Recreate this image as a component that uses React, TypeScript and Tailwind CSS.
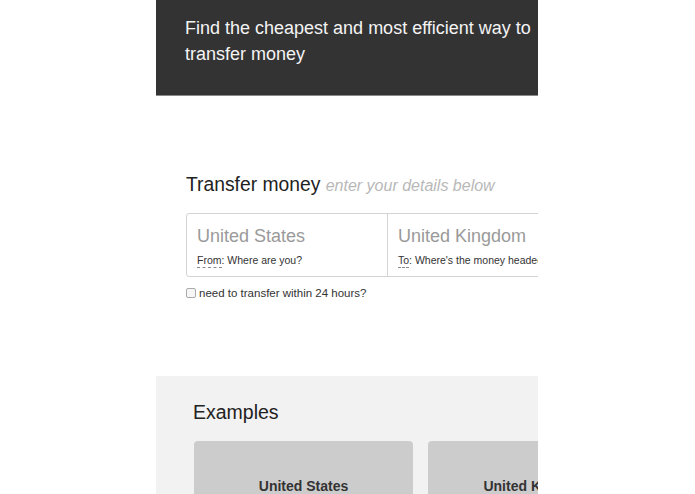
import React from 'react';

const font = { fontFamily: '"Liberation Sans", Arial, Helvetica, sans-serif' };

function CountryCell({ country, label, hint, last }: { country: string; label: string; hint: string; last?: boolean }) {
  return (
    <div className={`w-[201px] shrink-0 px-[10px] pt-[9px] ${last ? '' : 'border-r border-[#d4d4d4]'}`}>
      <div className="text-[18px] leading-[26px] text-[#9a9a9a] whitespace-nowrap">{country}</div>
      <div className="mt-[4px] text-[10.5px] leading-[14px] text-[#333] whitespace-nowrap">
        <span className="border-b border-dashed border-[#888] pb-[1px]">{label}</span>
        {': '}
        {hint}
      </div>
    </div>
  );
}

export default function App() {
  return (
    <div className="min-h-[494px] bg-white" style={font}>
      <div className="ml-[156px] w-[382px] overflow-hidden">
        {/* Hero */}
        <div className="h-[96px] bg-[#333333] border-b border-[#8a8a8a] pl-[29px] pt-[15px]">
          <p className="text-[18px] leading-[26px] text-[#f4f4f4] whitespace-nowrap">
            Find the cheapest and most efficient way to
            <br />
            transfer money
          </p>
        </div>

        {/* Transfer form */}
        <div className="h-[280px] bg-white px-[30px] pt-[76px]">
          <h2 className="text-[19.3px] leading-[26px] text-[#222] whitespace-nowrap">
            Transfer money{' '}
            <em className="text-[16px] text-[#b8b8b8]">enter your details below</em>
          </h2>
          <div className="mt-[14px] flex w-[402px] h-[64px] border border-[#d4d4d4] rounded-[3px]">
            <CountryCell country="United States" label="From" hint="Where are you?" />
            <CountryCell country="United Kingdom" label="To" hint="Where's the money headed?" last />
          </div>
          <label className="mt-[9px] flex items-center gap-[3px] text-[11.5px] leading-[14px] text-[#333] whitespace-nowrap">
            <span className="inline-block w-[10px] h-[10px] border border-[#aaa] rounded-[2px] bg-[#f6f6f6]" />
            need to transfer within 24 hours?
          </label>
        </div>

        {/* Examples */}
        <div className="h-[118px] bg-[#f2f2f2] pl-[37px] pt-[23px]">
          <h3 className="text-[19.5px] leading-[26px] text-[#222]">Examples</h3>
          <div className="mt-[16px] ml-[1px] flex gap-[15px] w-[500px]">
            {['United States', 'United Kingdom'].map(c => (
              <div key={c} className="w-[219px] h-[80px] shrink-0 rounded-[4px] bg-[#cccccc] pt-[33px] text-center">
                <span className="text-[14px] font-bold text-[#333]">{c}</span>
              </div>
            ))}
          </div>
        </div>
      </div>
    </div>
  );
}
